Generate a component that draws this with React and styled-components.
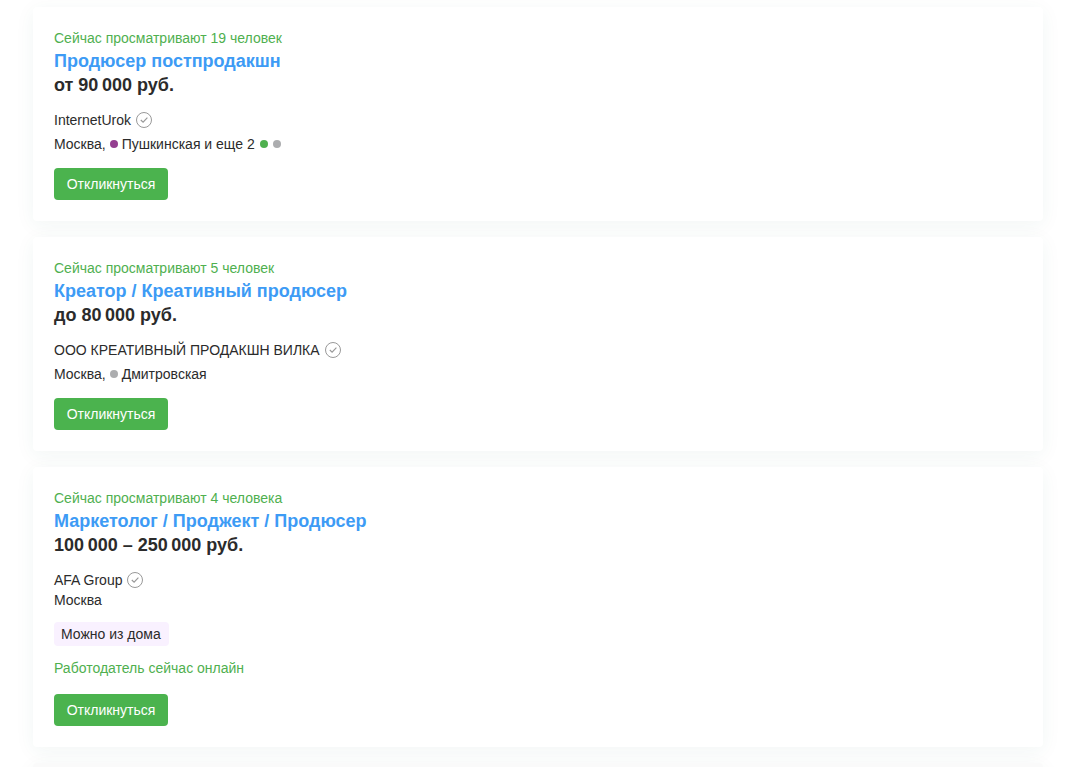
import styled, { createGlobalStyle } from 'styled-components';

const GlobalStyle = createGlobalStyle`
  * {
    box-sizing: border-box;
  }

  body {
    margin: 0;
    background-color: #ffffff;
    color: #2b2b2b;
    font-family: 'Liberation Sans', Arial, sans-serif;
    font-size: 14px;
    line-height: 20px;
    overflow: hidden;
  }
`;

const VacancyList = styled.main`
  display: flex;
  flex-direction: column;
  gap: 16px;
  height: 100vh;
  padding: 7px 32px 0 33px;
  overflow: hidden;
`;

const Card = styled.article`
  flex: none;
  padding: 21px;
  border-radius: 4px;
  background-color: ${(props) => (props.$viewed ? '#fafafa' : '#ffffff')};
  box-shadow: 0 4px 20px rgba(40, 110, 90, 0.06);
`;

const Watching = styled.div`
  margin-bottom: 1px;
  color: #4fb04f;
`;

const Title = styled.h2`
  margin: 0;
  font-size: 18px;
  line-height: 24px;
`;

const TitleLink = styled.a`
  color: #3d9bf5;
  text-decoration: none;
  &:hover {
    color: #1f7fe0;
  }
`;

const Salary = styled.div`
  margin-bottom: 13px;
  font-size: 18px;
  font-weight: bold;
  line-height: 24px;
`;

const Company = styled.div`
  display: flex;
  align-items: center;
  gap: 5px;
`;

const CompanyLink = styled.a`
  color: inherit;
  text-decoration: none;
`;

const Address = styled.div`
  display: flex;
  align-items: center;
  min-height: ${(props) => (props.$metro ? '28px' : '20px')};
`;

const Station = styled.span`
  display: flex;
  align-items: center;
  gap: 4px;
  margin-left: 4px;
`;

const LineDots = styled.span`
  display: flex;
  gap: 5px;
  margin-left: 1px;
`;

const Dot = styled.span`
  width: 8px;
  height: 8px;
  border-radius: 50%;
  background-color: ${(props) => props.$color};
`;

const Tag = styled.span`
  display: block;
  width: fit-content;
  margin-top: 12px;
  padding: 2px 8px 2px 7px;
  border-radius: 4px;
  background-color: #f9f1ff;
`;

const Online = styled.div`
  margin: 12px 0 16px;
  color: #4fb04f;
`;

const RespondButton = styled.button`
  display: block;
  min-width: 114px;
  height: 32px;
  margin-top: 10px;
  padding: 0 12px;
  border: none;
  border-radius: 4px;
  background-color: #4bb34e;
  color: #ffffff;
  font-family: inherit;
  font-size: 14px;
  line-height: 20px;
  cursor: pointer;
  &:hover {
    background-color: #3f9f42;
  }
`;

const vacancies = [
  {
    watching: 'Сейчас просматривают 19 человек',
    title: 'Продюсер постпродакшн',
    salary: 'от 90\u202f000 руб.',
    company: 'InternetUrok',
    station: { color: '#943e90', name: 'Пушкинская и еще 2', more: ['#4fb04f', '#acadaf'] },
  },
  {
    watching: 'Сейчас просматривают 5 человек',
    title: 'Креатор / Креативный продюсер',
    salary: 'до 80\u202f000 руб.',
    company: 'ООО КРЕАТИВНЫЙ ПРОДАКШН ВИЛКА',
    station: { color: '#acadaf', name: 'Дмитровская', more: [] },
  },
  {
    watching: 'Сейчас просматривают 4 человека',
    title: 'Маркетолог / Проджект / Продюсер',
    salary: '100\u202f000 – 250\u202f000 руб.',
    company: 'AFA Group',
    tag: 'Можно из дома',
    online: true,
  },
];

function VerifiedIcon() {
  return (
    <svg width='16' height='16' viewBox='0 0 16 16' fill='none' stroke='#999999' aria-hidden='true'>
      <circle cx='8' cy='8' r='7.5' />
      <path d='M4.8 8L7.1 10.2L11.4 5.7' strokeWidth='1.2' />
    </svg>
  );
}

function Vacancy({ vacancy }) {
  const { watching, title, salary, company, station, tag, online } = vacancy;

  return (
    <Card>
      <Watching>{watching}</Watching>
      <Title>
        <TitleLink href='#'>{title}</TitleLink>
      </Title>
      <Salary>{salary}</Salary>
      <Company>
        <CompanyLink href='#'>{company}</CompanyLink>
        <VerifiedIcon />
      </Company>
      <Address $metro={Boolean(station)}>
        {station ? 'Москва,' : 'Москва'}
        {station && (
          <Station>
            <Dot $color={station.color} />
            {station.name}
            {station.more.length > 0 && (
              <LineDots>
                {station.more.map((color) => (
                  <Dot key={color} $color={color} />
                ))}
              </LineDots>
            )}
          </Station>
        )}
      </Address>
      {tag && <Tag>{tag}</Tag>}
      {online && <Online>Работодатель сейчас онлайн</Online>}
      <RespondButton type='button'>Откликнуться</RespondButton>
    </Card>
  );
}

function App() {
  return (
    <>
      <GlobalStyle />
      <VacancyList>
        {vacancies.map((vacancy) => (
          <Vacancy key={vacancy.title} vacancy={vacancy} />
        ))}
        <Card $viewed />
      </VacancyList>
    </>
  );
}

export default App;
